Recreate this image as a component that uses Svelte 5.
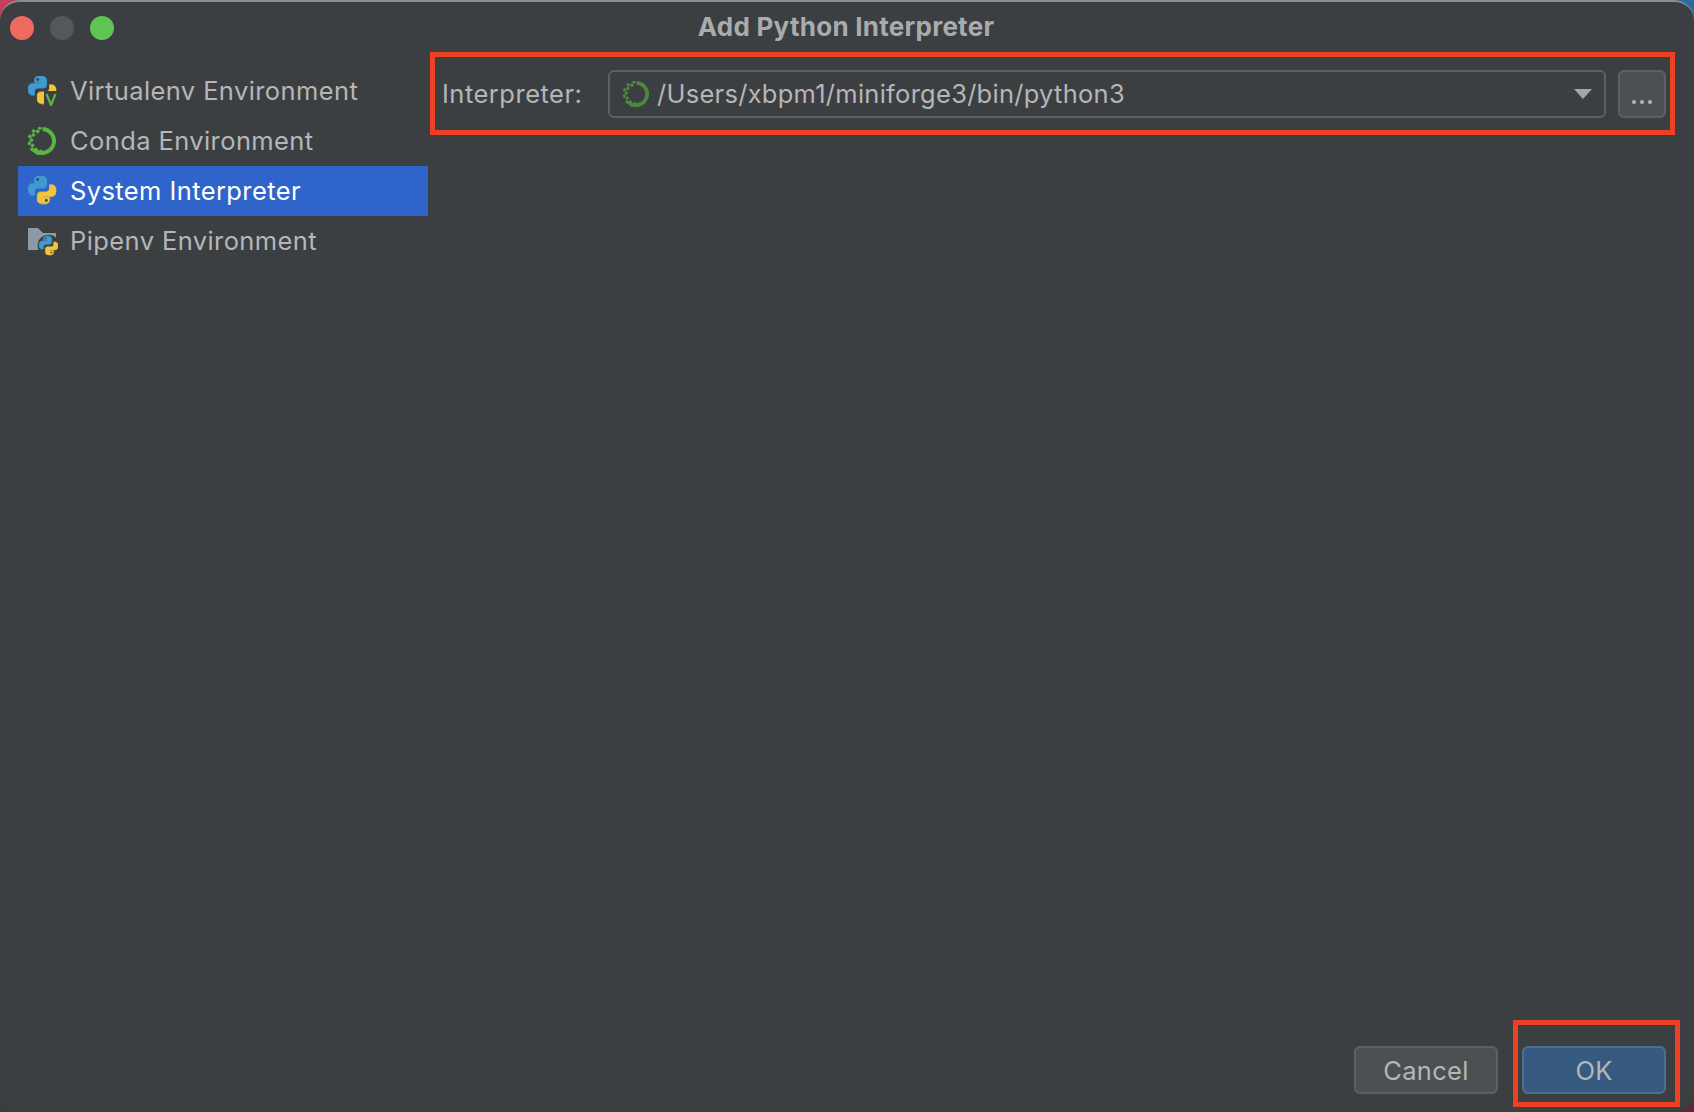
<script>
  const pythonBlue = "M12 1C8.6 1 7 2.3 7 4.6V7h5.4v1H5C2.6 8 1 10 1 13.4s1.6 5.4 3.8 5.4H7v-2.9C7 13.500 8.600 12.200 10.800 12.200h4.500c1.800 0 3-1.200 3-3V4.600C18.300 2.300 16 1 12 1z";
  const pythonYellow = "M16 27c3.400 0 5-1.300 5-3.600V21h-5.400v-1H23c2.400 0 4-2 4-5.400s-1.600-5.400-3.800-5.400H21v2.900c0 2.400-1.600 3.700-3.800 3.700h-4.500c-1.800 0-3 1.200-3 3v4.600C9.700 25.700 12 27 16 27z";

  const environments = [
    { name: "Virtualenv Environment", icon: "venv" },
    { name: "Conda Environment", icon: "conda" },
    { name: "System Interpreter", icon: "python", selected: true },
    { name: "Pipenv Environment", icon: "pipenv" }
  ];

  // speckled left side of the conda ring, two staggered rows of squares
  const condaDots = [];
  for (let deg = 185; deg <= 350; deg += 15) {
    const rad = (deg * Math.PI) / 180;
    const r = Math.round((deg - 185) / 15) % 2 ? 13 : 10.5;
    condaDots.push({ x: 14 + r * Math.sin(rad), y: 14 - r * Math.cos(rad), deg });
  }
</script>

{#snippet python()}
  <g transform="translate(-1.080 -1.080) scale(1.077)">
    <path d={pythonBlue} fill="#3f9bd1" stroke="#3f9bd1" stroke-width="0.7" />
    <path d={pythonYellow} fill="#f2c33d" stroke="#f2c33d" stroke-width="0.7" />
    <circle cx="10" cy="4.300" r="1.300" fill="#3c3f41" />
    <circle cx="18" cy="23.700" r="1.300" fill="#3c3f41" />
  </g>
{/snippet}

{#snippet conda(size, color)}
  <svg class="icon" width={size} height={size} viewBox="0 0 28 28" aria-hidden="true">
    <path d="M14.500 2A12 12 0 1 1 5.500 22.500" fill="none" stroke={color} stroke-width="4" />
    {#each condaDots as dot}
      <rect x={dot.x - 1.600} y={dot.y - 1.600} width="3.200" height="3.200" fill={color} transform="rotate(45 {dot.x} {dot.y})" />
    {/each}
  </svg>
{/snippet}

<div class="window">
  <header class="titlebar">
    <div class="lights">
      <span class="light red"></span>
      <span class="light idle"></span>
      <span class="light green"></span>
    </div>
    <h1>Add Python Interpreter</h1>
  </header>

  <div class="body">
    <ul class="sidebar">
      {#each environments as env}
        <li class:selected={env.selected}>
          {#if env.icon === "conda"}
            <span class="icon-slot">{@render conda(28, "#5bb543")}</span>
          {:else}
            <svg class="icon" width="30" height="30" viewBox="0 0 30 30" aria-hidden="true">
              {#if env.icon === "venv"}
                {@render python()}
                <rect x="16" y="15" width="14" height="15" fill="#3c3f41" />
                <path d="M18.500 18l4.500 11L27.500 18" fill="none" stroke="#5bb543" stroke-width="2.200" />
              {:else if env.icon === "python"}
                {@render python()}
              {:else}
                <path d="M0 2h10l5 5h13v17H0z" fill="#8c9aa5" />
                <g transform="translate(11 10) scale(.68)">
                  <circle cx="14" cy="14" r="16" fill="#3c3f41" />
                  {@render python()}
                </g>
              {/if}
            </svg>
          {/if}
          <span class="label">{env.name}</span>
        </li>
      {/each}
    </ul>

    <main class="main">
      <div class="marked form-row">
        <label for="interpreter">Interpreter:</label>
        <div class="combo" id="interpreter">
          {@render conda(26, "#4b8a3c")}
          <span class="path">/Users/xbpm1/miniforge3/bin/python3</span>
          <span class="arrow"></span>
        </div>
        <button class="more" aria-label="Browse"><span></span><span></span><span></span></button>
      </div>
    </main>
  </div>

  <footer class="footer">
    <button class="action cancel">Cancel</button>
    <div class="marked ok-box">
      <button class="action ok">OK</button>
    </div>
  </footer>
</div>

<style>
  :global(body) {
    margin: 0;
    background:
      radial-gradient(circle at 0 0, #c2405c 0, #c2405c 24px, transparent 25px),
      radial-gradient(circle at 100% 0, #2a6aa5 0, #2a6aa5 24px, transparent 25px),
      radial-gradient(circle at 100% 100%, #5a2a3a 0, #5a2a3a 24px, transparent 25px),
      #3a3d40;
    min-height: 1112px;
  }

  .window {
    width: 1694px;
    height: 1112px;
    box-sizing: border-box;
    display: flex;
    flex-direction: column;
    background: #3c3f41;
    border-top: 2px solid #8a8c8d;
    border-radius: 20px;
    color: #b4b6b7;
    font-family: Inter, "Liberation Sans", sans-serif;
    font-size: 25.5px;
    letter-spacing: 0.3px;
    overflow: hidden;
  }

  .titlebar {
    height: 50px;
    flex: none;
    position: relative;
    display: flex;
    align-items: center;
    justify-content: center;
  }

  .titlebar h1 {
    margin: 0 2px 1px 0;
    font-size: 26px;
    font-weight: 700;
    letter-spacing: 0.25px;
    color: #a9abac;
  }

  .lights {
    position: absolute;
    left: 10px;
    top: 14px;
    display: flex;
    gap: 16px;
  }

  .light {
    width: 24px;
    height: 24px;
    border-radius: 50%;
  }

  .red { background: #ee6a5f; }
  .idle { background: #54585a; }
  .green { background: #5fc454; }

  .body {
    flex: 1;
    display: flex;
    min-height: 0;
  }

  .sidebar {
    list-style: none;
    width: 410px;
    margin: 14px 2px 0 18px;
    padding: 0;
    flex: none;
  }

  .sidebar li {
    height: 50px;
    display: flex;
    align-items: center;
    gap: 12px;
    padding-left: 10px;
  }

  .sidebar li.selected {
    background: #2f65ca;
    color: #fff;
  }

  .label {
    letter-spacing: 0.4px;
    margin-bottom: 2px;
  }

  .icon {
    flex: none;
    display: block;
  }

  .icon-slot {
    width: 30px;
    flex: none;
  }

  .main {
    flex: 1;
    padding-right: 19px;
  }

  .marked {
    border: 5px solid #ee4023;
    box-sizing: border-box;
  }

  .form-row {
    height: 83px;
    display: flex;
    align-items: center;
    padding: 0 4px 0 7px;
  }

  .form-row label {
    width: 166px;
    flex: none;
    letter-spacing: 0.5px;
  }

  .combo {
    flex: 1;
    height: 48px;
    box-sizing: border-box;
    border: 2px solid #5e6060;
    border-radius: 6px;
    display: flex;
    align-items: center;
    gap: 8px;
    padding: 0 12px 0 13px;
  }

  .path {
    flex: 1;
    letter-spacing: 0.27px;
  }

  .arrow {
    width: 0;
    height: 0;
    border-left: 9px solid transparent;
    border-right: 9px solid transparent;
    border-top: 10px solid #a4a6a7;
  }

  .more {
    width: 48px;
    height: 48px;
    margin-left: 12px;
    flex: none;
    box-sizing: border-box;
    background: #4c5052;
    border: 2px solid #5e6060;
    border-radius: 6px;
    display: flex;
    align-items: flex-end;
    justify-content: center;
    gap: 4px;
    padding: 0 0 12px;
  }

  .more span {
    width: 4px;
    height: 4px;
    border-radius: 50%;
    background: #b4b6b7;
  }

  .footer {
    flex: none;
    display: flex;
    justify-content: flex-end;
    align-items: flex-end;
    gap: 15px;
    padding: 0 14px 5px 0;
  }

  .ok-box {
    padding: 21px 9px 8px 4px;
  }

  .action {
    width: 144px;
    height: 48px;
    box-sizing: border-box;
    border-radius: 6px;
    font: inherit;
    letter-spacing: inherit;
    color: #b4b6b7;
    padding: 0;
  }

  .cancel {
    background: #4c5052;
    border: 2px solid #5e6060;
    margin-bottom: 13px;
  }

  .ok {
    display: block;
    background: #375a81;
    border: 2px solid #4c708c;
  }
</style>
